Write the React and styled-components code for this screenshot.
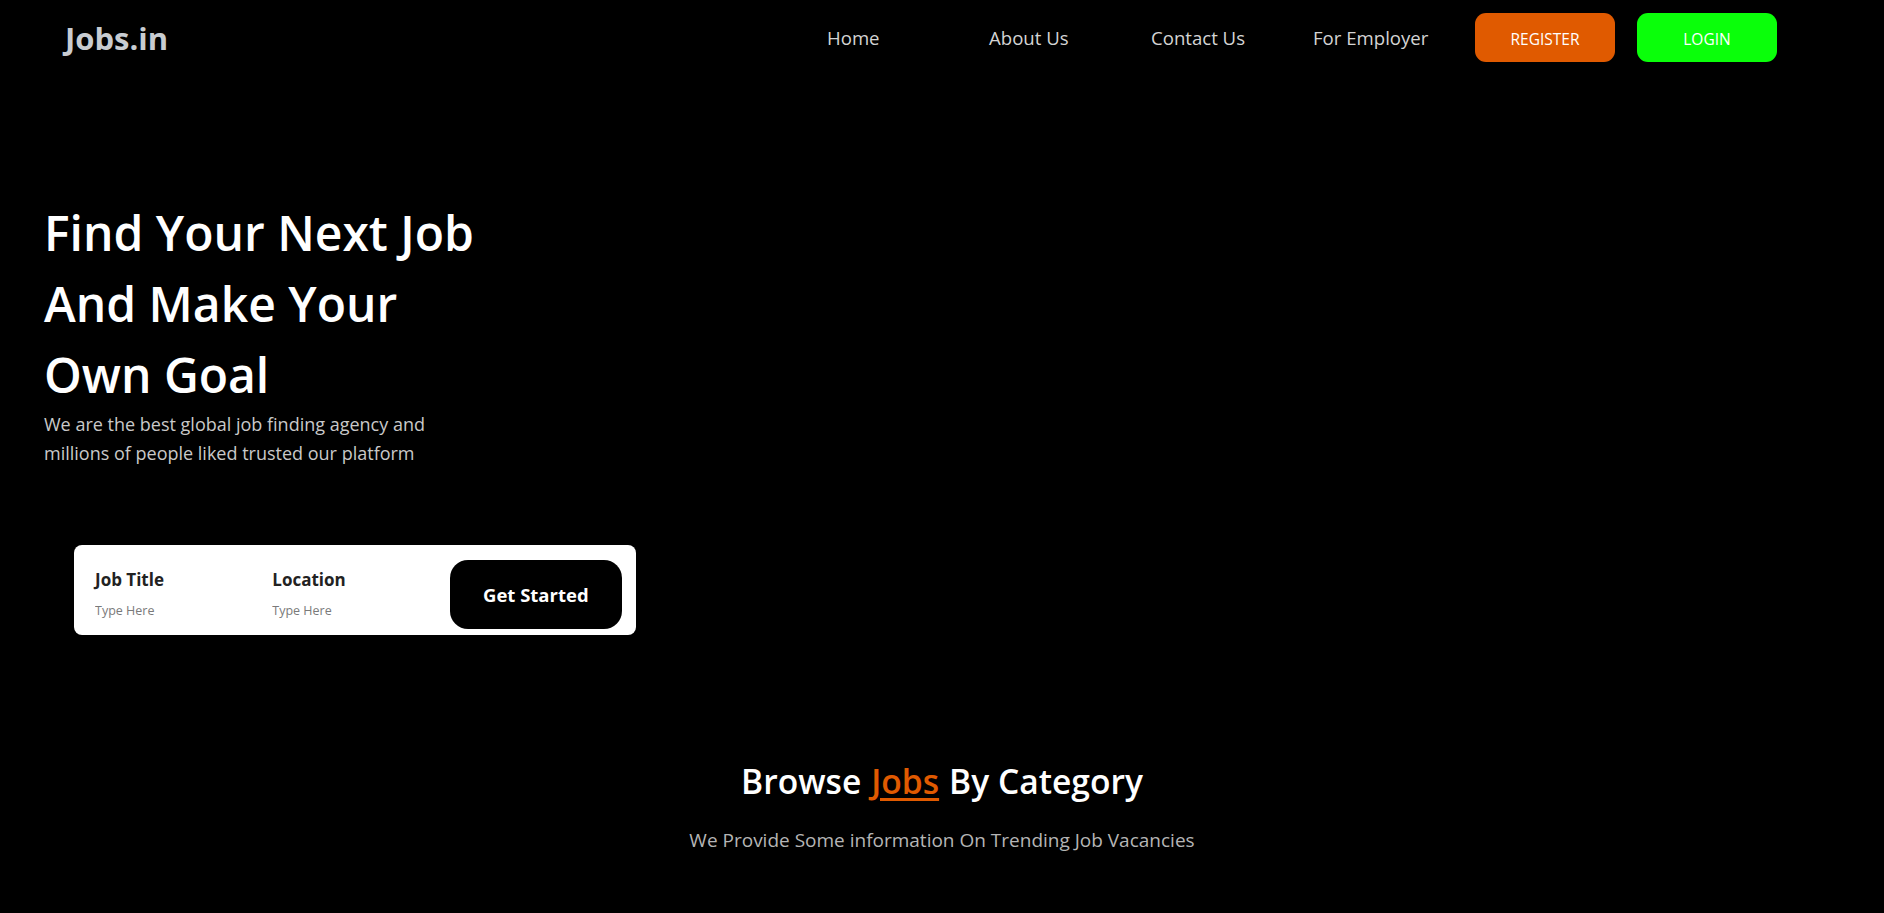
import React from "react";
import styled, { createGlobalStyle } from "styled-components";

const GlobalStyle = createGlobalStyle`
  body {
    margin: 0;
    background: #000;
    font-family: "Open Sans", "Noto Sans", sans-serif;
  }
  * {
    box-sizing: border-box;
  }
`;

////////////////////////////////////////
// Header
const Header = styled.header`
  display: flex;
  align-items: center;
  justify-content: space-between;
  padding: 13px 107px 0 65px;
`;

const Logo = styled.h1`
  margin: 0;
  font-size: 31px;
  font-weight: 700;
  color: #c8ccd1;
`;

const NavList = styled.ul`
  display: flex;
  align-items: center;
  gap: 22px;
  list-style: none;
  margin: 0;
  padding: 0;
`;

const NavItem = styled.li`
  width: 140px;
`;

const NavLink = styled.a`
  color: #d4d4d4;
  font-size: 18.6px;
  text-decoration: none;
  cursor: pointer;
`;

const NavButton = styled.button`
  width: 140px;
  height: 49px;
  padding-top: 3px;
  border: none;
  border-radius: 11px;
  background: ${(props) => props.bg};
  color: #fff;
  font-family: inherit;
  font-size: 15.5px;
  cursor: pointer;
`;

////////////////////////////////////////
// Hero
const Hero = styled.section`
  padding: 135px 0 0 44px;
`;

const Title = styled.h2`
  margin: 0;
  font-size: 48px;
  font-weight: 600;
  line-height: 71px;
  color: #fff;
`;

const Lead = styled.p`
  margin: 0;
  font-size: 18px;
  line-height: 29px;
  color: #c9c9c9;
`;

const SearchCard = styled.form`
  display: flex;
  align-items: flex-start;
  width: 562px;
  height: 90px;
  margin: 77px 0 0 30px;
  padding: 15px 14px 0 21px;
  background: #fff;
  border-radius: 8px;
`;

const Field = styled.div`
  width: 178px;
  display: flex;
  flex-direction: column;
`;

const FieldLabel = styled.label`
  font-size: 17px;
  font-weight: 700;
  color: #222;
  line-height: 24px;
  margin-top: 8px;
`;

const FieldInput = styled.input`
  border: none;
  outline: none;
  padding: 0;
  margin-top: 10px;
  font-family: inherit;
  font-size: 12.5px;
  color: #777;
  &::placeholder {
    color: #7a7a7a;
  }
`;

const StartButton = styled.button`
  margin-left: auto;
  width: 173px;
  height: 69px;
  border: none;
  border-radius: 18px;
  background: #000;
  color: #fff;
  font-family: inherit;
  font-size: 18.5px;
  font-weight: 700;
  cursor: pointer;
`;

////////////////////////////////////////
// Category
const Category = styled.section`
  margin-top: 124px;
  text-align: center;
`;

const CategoryTitle = styled.h3`
  margin: 0;
  font-size: 33.6px;
  font-weight: 600;
  color: #fff;
  line-height: 44px;
`;

const Highlight = styled.span`
  color: #e05a00;
  text-decoration: underline;
  text-underline-offset: 4px;
  margin: 0 10px;
`;

const CategoryText = styled.p`
  margin: 24px 0 0;
  font-size: 19px;
  color: #b5b5b5;
`;

export default function App() {
  return (
    <>
      <GlobalStyle />
      <Header>
        <Logo>Jobs.in</Logo>
        <NavList>
          <NavItem>
            <NavLink>Home</NavLink>
          </NavItem>
          <NavItem>
            <NavLink>About Us</NavLink>
          </NavItem>
          <NavItem>
            <NavLink>Contact Us</NavLink>
          </NavItem>
          <NavItem>
            <NavLink>For Employer</NavLink>
          </NavItem>
          <li>
            <NavButton bg="#e05a00">REGISTER</NavButton>
          </li>
          <li>
            <NavButton bg="#0aff0a">LOGIN</NavButton>
          </li>
        </NavList>
      </Header>

      <Hero>
        <Title>
          Find Your Next Job
          <br />
          And Make Your
          <br />
          Own Goal
        </Title>
        <Lead>
          We are the best global job finding agency and
          <br />
          millions of people liked trusted our platform
        </Lead>

        <SearchCard onSubmit={(e) => e.preventDefault()}>
          <Field>
            <FieldLabel>Job Title</FieldLabel>
            <FieldInput placeholder="Type Here" />
          </Field>
          <Field>
            <FieldLabel>Location</FieldLabel>
            <FieldInput placeholder="Type Here" />
          </Field>
          <StartButton type="submit">Get Started</StartButton>
        </SearchCard>
      </Hero>

      <Category>
        <CategoryTitle>
          Browse<Highlight>Jobs</Highlight>By Category
        </CategoryTitle>
        <CategoryText>We Provide Some information On Trending Job Vacancies</CategoryText>
      </Category>
    </>
  );
}
